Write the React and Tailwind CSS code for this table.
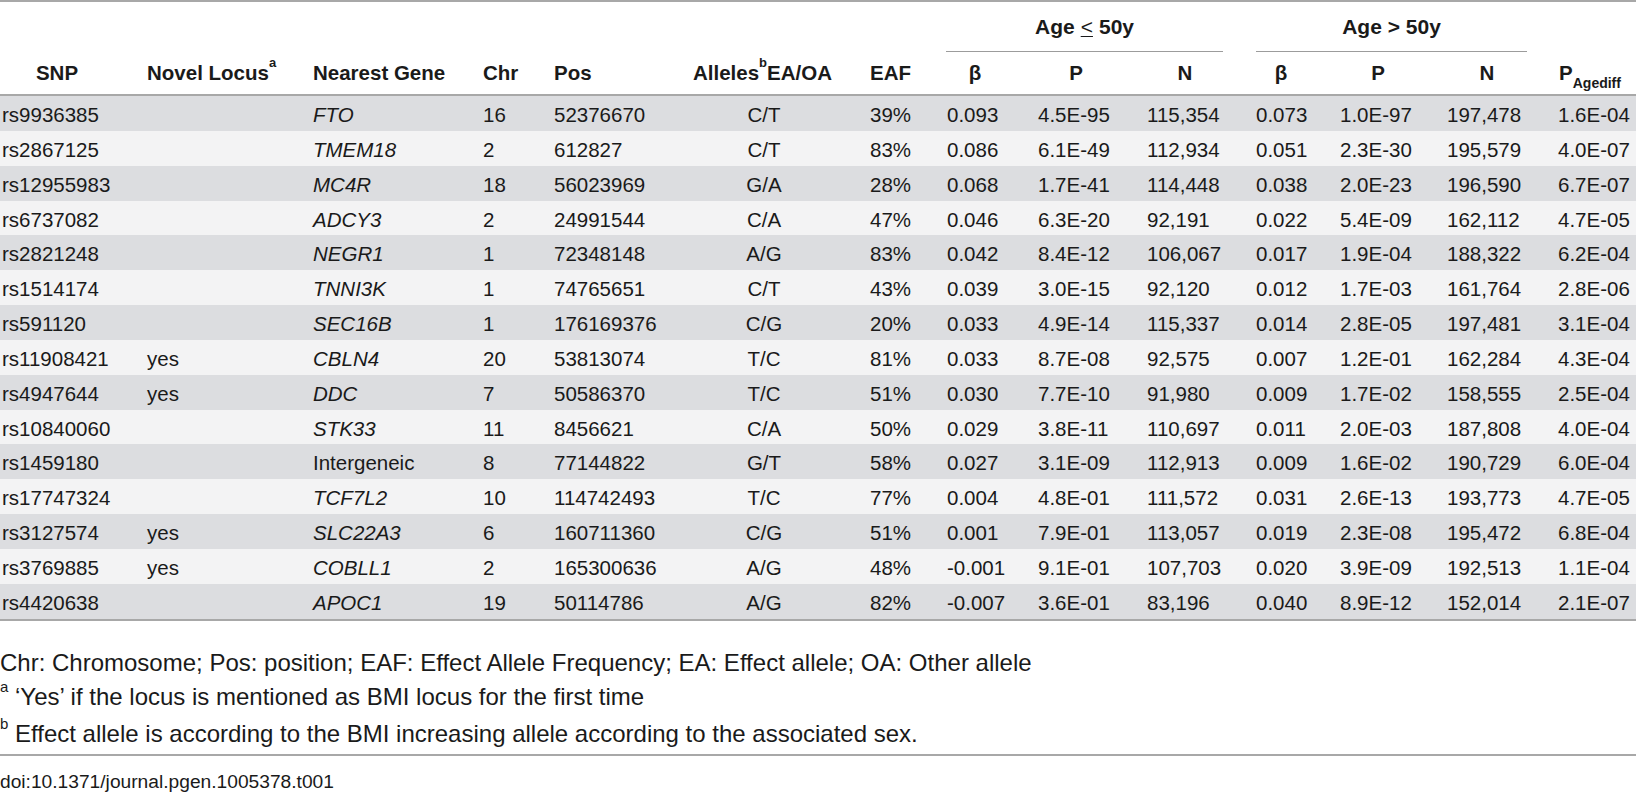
import React from "react";

const rows = [
  ["rs9936385", "", "FTO", "16", "52376670", "C/T", "39%", "0.093", "4.5E-95", "115,354", "0.073", "1.0E-97", "197,478", "1.6E-04"],
  ["rs2867125", "", "TMEM18", "2", "612827", "C/T", "83%", "0.086", "6.1E-49", "112,934", "0.051", "2.3E-30", "195,579", "4.0E-07"],
  ["rs12955983", "", "MC4R", "18", "56023969", "G/A", "28%", "0.068", "1.7E-41", "114,448", "0.038", "2.0E-23", "196,590", "6.7E-07"],
  ["rs6737082", "", "ADCY3", "2", "24991544", "C/A", "47%", "0.046", "6.3E-20", "92,191", "0.022", "5.4E-09", "162,112", "4.7E-05"],
  ["rs2821248", "", "NEGR1", "1", "72348148", "A/G", "83%", "0.042", "8.4E-12", "106,067", "0.017", "1.9E-04", "188,322", "6.2E-04"],
  ["rs1514174", "", "TNNI3K", "1", "74765651", "C/T", "43%", "0.039", "3.0E-15", "92,120", "0.012", "1.7E-03", "161,764", "2.8E-06"],
  ["rs591120", "", "SEC16B", "1", "176169376", "C/G", "20%", "0.033", "4.9E-14", "115,337", "0.014", "2.8E-05", "197,481", "3.1E-04"],
  ["rs11908421", "yes", "CBLN4", "20", "53813074", "T/C", "81%", "0.033", "8.7E-08", "92,575", "0.007", "1.2E-01", "162,284", "4.3E-04"],
  ["rs4947644", "yes", "DDC", "7", "50586370", "T/C", "51%", "0.030", "7.7E-10", "91,980", "0.009", "1.7E-02", "158,555", "2.5E-04"],
  ["rs10840060", "", "STK33", "11", "8456621", "C/A", "50%", "0.029", "3.8E-11", "110,697", "0.011", "2.0E-03", "187,808", "4.0E-04"],
  ["rs1459180", "", "Intergeneic", "8", "77144822", "G/T", "58%", "0.027", "3.1E-09", "112,913", "0.009", "1.6E-02", "190,729", "6.0E-04"],
  ["rs17747324", "", "TCF7L2", "10", "114742493", "T/C", "77%", "0.004", "4.8E-01", "111,572", "0.031", "2.6E-13", "193,773", "4.7E-05"],
  ["rs3127574", "yes", "SLC22A3", "6", "160711360", "C/G", "51%", "0.001", "7.9E-01", "113,057", "0.019", "2.3E-08", "195,472", "6.8E-04"],
  ["rs3769885", "yes", "COBLL1", "2", "165300636", "A/G", "48%", "-0.001", "9.1E-01", "107,703", "0.020", "3.9E-09", "192,513", "1.1E-04"],
  ["rs4420638", "", "APOC1", "19", "50114786", "A/G", "82%", "-0.007", "3.6E-01", "83,196", "0.040", "8.9E-12", "152,014", "2.1E-07"],
];

const cols =
  "grid grid-cols-[147px_166px_170px_71px_139px_177px_77px_91px_109px_109px_84px_107px_101px_88px]";

const Row = ({ r, dark }) => (
  <div className={`${cols} h-[34.85px] items-center pt-1 ${dark ? "bg-[#dcdde0]" : "bg-[#f3f3f4]"}`}>
    <div className="pl-[2px]">{r[0]}</div>
    <div>{r[1]}</div>
    <div className={r[2] === "Intergeneic" ? "" : "italic"}>{r[2]}</div>
    <div>{r[3]}</div>
    <div>{r[4]}</div>
    <div className="w-[142px] text-center">{r[5]}</div>
    <div>{r[6]}</div>
    <div>{r[7]}</div>
    <div>{r[8]}</div>
    <div>{r[9]}</div>
    <div>{r[10]}</div>
    <div>{r[11]}</div>
    <div>{r[12]}</div>
    <div className="pl-[10px]">{r[13]}</div>
  </div>
);

const App = () => {
  return (
    <div className="w-[1636px] h-[800px] bg-white text-[#1a1a1a] font-['Liberation_Sans',Arial,sans-serif] overflow-hidden">
      <div className="border-t-2 border-[#a8a8a8]">
        <div className={`${cols} h-[50px] font-bold text-[21px]`}>
          <div className="col-span-7"></div>
          <div className="col-span-3 mr-[33px] ml-[-1px] border-b border-[#9c9c9c] flex items-center justify-center">
            Age <span className="font-normal mx-[6px] underline underline-offset-2 decoration-1">&lt;</span> 50y
          </div>
          <div className="col-span-3 mr-[21px] border-b border-[#9c9c9c] flex items-center justify-center">
            Age &gt; 50y
          </div>
          <div></div>
        </div>
        <div className={`${cols} h-[44px] items-center font-bold text-[20.5px] border-b-2 border-[#a8a8a8]`}>
          <div className="ml-[2px] w-[110px] text-center">SNP</div>
          <div>
            Novel Locus<sup className="text-[13px] align-[6px]">a</sup>
          </div>
          <div>Nearest Gene</div>
          <div>Chr</div>
          <div>Pos</div>
          <div>
            Alleles<sup className="text-[13px] align-[6px]">b</sup>EA/OA
          </div>
          <div>EAF</div>
          <div className="w-[56px] text-center">β</div>
          <div className="w-[76px] text-center">P</div>
          <div className="w-[76px] text-center">N</div>
          <div className="w-[50px] text-center">β</div>
          <div className="w-[76px] text-center">P</div>
          <div className="w-[80px] text-center">N</div>
          <div className="w-[84px] text-center">
            P<sub className="text-[14px] align-[-5px]">Agediff</sub>
          </div>
        </div>
        <div className="text-[20.5px] border-b-2 border-[#a8a8a8]">
          {rows.map((r, i) => (
            <Row key={r[0]} r={r} dark={i % 2 === 0} />
          ))}
        </div>
      </div>
      <div className="mt-[25px] text-[24px] leading-[34px]">
        <p>Chr: Chromosome; Pos: position; EAF: Effect Allele Frequency; EA: Effect allele; OA: Other allele</p>
        <p>
          <sup className="text-[15px] align-[5px]">a</sup> ‘Yes’ if the locus is mentioned as BMI locus for the first time
        </p>
        <p className="pt-[3px]">
          <sup className="text-[15px] align-[5px]">b</sup> Effect allele is according to the BMI increasing allele according to the associated sex.
        </p>
      </div>
      <div className="mt-[3px] border-t-2 border-[#a8a8a8]"></div>
      <p className="mt-[10px] text-[19.2px] leading-[32px]">doi:10.1371/journal.pgen.1005378.t001</p>
    </div>
  );
};

export default App;
